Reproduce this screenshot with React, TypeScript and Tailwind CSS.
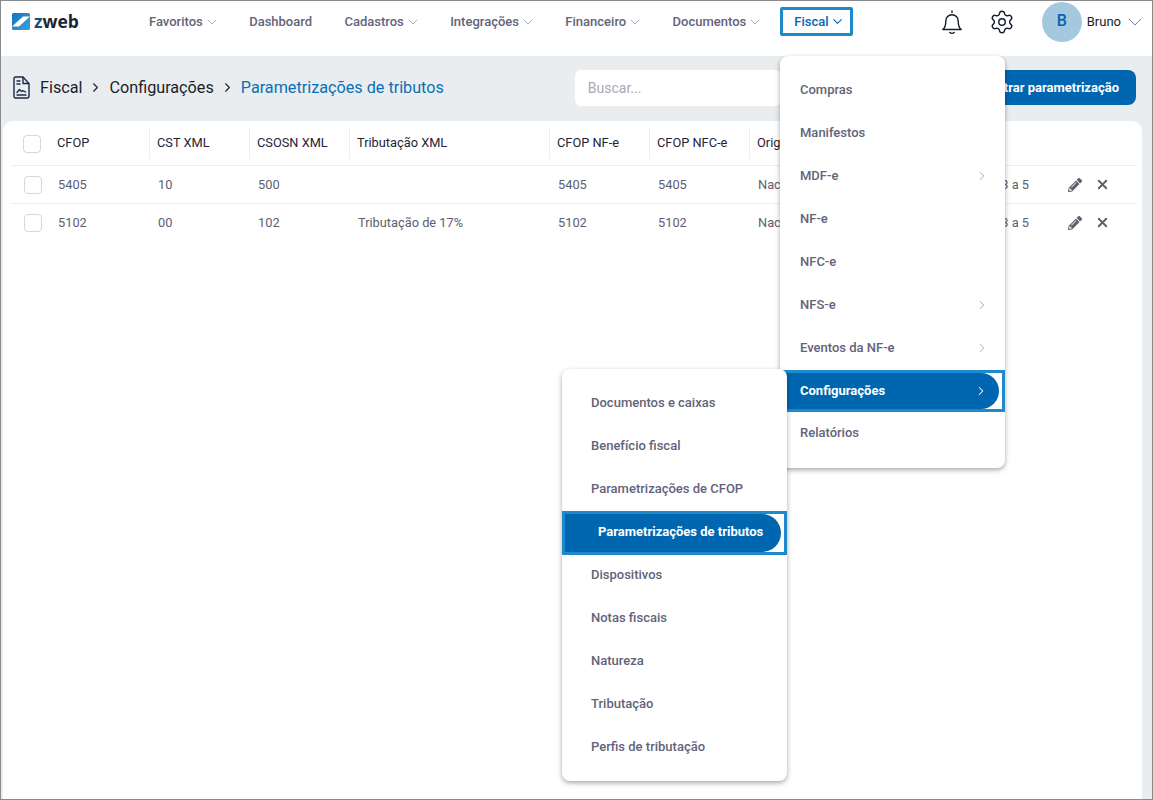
import { ChevronDown, ChevronRight, Settings, X } from "lucide-react";
import { FaPencilAlt } from "react-icons/fa";

const nav = [
  { label: "Favoritos", arrow: true },
  { label: "Dashboard", arrow: false },
  { label: "Cadastros", arrow: true },
  { label: "Integrações", arrow: true },
  { label: "Financeiro", arrow: true },
  { label: "Documentos", arrow: true },
];

const fiscalItems = [
  { label: "Compras" },
  { label: "Manifestos" },
  { label: "MDF-e", arrow: true },
  { label: "NF-e" },
  { label: "NFC-e" },
  { label: "NFS-e", arrow: true },
  { label: "Eventos da NF-e", arrow: true },
  { label: "Configurações", arrow: true, active: true },
  { label: "Relatórios" },
];

const configItems = [
  { label: "Documentos e caixas" },
  { label: "Benefício fiscal" },
  { label: "Parametrizações de CFOP" },
  { label: "Parametrizações de tributos", active: true },
  { label: "Dispositivos" },
  { label: "Notas fiscais" },
  { label: "Natureza" },
  { label: "Tributação" },
  { label: "Perfis de tributação" },
];

const columns = [
  { label: "CFOP", w: "w-[100px]" },
  { label: "CST XML", w: "w-[100px]" },
  { label: "CSOSN XML", w: "w-[100px]" },
  { label: "Tributação XML", w: "w-[200px]" },
  { label: "CFOP NF-e", w: "w-[100px]" },
  { label: "CFOP NFC-e", w: "w-[100px]" },
  { label: "Origem", w: "w-[100px]" },
];

const rows = [
  ["5405", "10", "500", "", "5405", "5405", "Nacional", "CST 3 a 5"],
  ["5102", "00", "102", "Tributação de 17%", "5102", "5102", "Nacional", "CST 3 a 5"],
];

function Logo() {
  return (
    <div className="flex items-center gap-[4px]">
      <svg width="18" height="17" viewBox="0 0 18 17">
        <defs>
          <linearGradient id="logoGrad" x1="0" y1="0" x2="1" y2="1">
            <stop offset="0" stopColor="#1573bb" />
            <stop offset="1" stopColor="#3f9fdc" />
          </linearGradient>
        </defs>
        <rect width="18" height="17" rx="1.5" fill="url(#logoGrad)" />
        <path d="M0 13.500 L11 3.500 H18 L7 13.500 Z" fill="#fff" />
      </svg>
      <span className="font-['Open_Sans',sans-serif] text-[17.5px] leading-none font-bold text-[#1d2433]">
        <span className="text-[#14507f]">z</span>web
      </span>
    </div>
  );
}

function BellIcon() {
  return (
    <svg width="26" height="26" viewBox="0 0 26 26" fill="none" stroke="#161c2b" strokeWidth="1.4" strokeLinejoin="round" strokeLinecap="round">
      <path d="M13 2v1.500M3.800 20.500c2.600-2 3-4.500 3-8.500a6.200 6.200 0 0 1 12.400 0c0 4 .4 6.500 3 8.500z" />
      <path d="M10.800 23.500c1.200 1.200 3.200 1.200 4.400 0" />
    </svg>
  );
}

function DocIcon() {
  return (
    <svg width="17" height="23" viewBox="0 0 17 23" fill="none" stroke="#1b2a4a" strokeWidth="1.4" strokeLinejoin="round" strokeLinecap="round">
      <path d="M2.500 1h7.500l6 6.500V20a2 2 0 0 1-2 2H2.500a1.500 1.500 0 0 1-1.500-1.500V2.500A1.500 1.500 0 0 1 2.500 1z" />
      <path d="M10 1.500V7.500h5.500M4 5h3M4 8h3M4 19h9M4 16.500l2.500-3 2 2 1.500-.8 2.500 1.300" />
    </svg>
  );
}

function Checkbox() {
  return <span className="block w-[18px] h-[18px] rounded-[4px] border border-[#d3d7de] bg-white" />;
}

function Menu({
  items,
  textPad,
  activePad,
  activeBox,
  className,
}: {
  items: { label: string; arrow?: boolean; active?: boolean }[];
  textPad: string;
  activePad: string;
  activeBox: string;
  className: string;
}) {
  return (
    <div className={`absolute w-[225px] h-[412px] bg-white rounded-[8px] shadow-[0_2px_5px_rgba(0,0,0,0.35)] pt-[12px] text-[13px] font-medium ${className}`}>
      {items.map((item) =>
        item.active ? (
          <div key={item.label} className={`border-[3px] border-[#1f8acb] bg-white flex ${activeBox}`}>
            <div className={`flex-1 mr-[3px] bg-[#0066b0] rounded-r-full flex items-center justify-between ${activePad} pr-[11px] text-white font-bold`}>
              <span>{item.label}</span>
              {item.arrow && <ChevronRight size={14} strokeWidth={1.75} />}
            </div>
          </div>
        ) : (
          <div key={item.label} className={`h-[43px] flex items-center justify-between ${textPad} pr-[16px] text-[#62647a]`}>
            <span>{item.label}</span>
            {item.arrow && <ChevronRight size={14} strokeWidth={1.5} className="text-[#9a9cab]" />}
          </div>
        ),
      )}
    </div>
  );
}

export default function App() {
  return (
    <div className="relative w-[1153px] h-[800px] overflow-hidden border border-[#8a8a8a] bg-[#e9edef] font-['Roboto',sans-serif] flex flex-col">
      <header className="h-[55px] bg-white flex items-center shrink-0">
        <div className="w-[148px] pl-[11px] -mt-[14px]">
          <Logo />
        </div>
        <nav className="flex items-center gap-[32.4px] text-[13px] font-medium text-[#62647a] -mt-[14px]">
          {nav.map((n) => (
            <div key={n.label} className="flex items-center">
              <span>{n.label}</span>
              {n.arrow && <ChevronDown size={16} strokeWidth={1.25} className="ml-px -mr-[3px] text-[#9a9cab]" />}
            </div>
          ))}
        </nav>
        <div className="ml-[20px] -mt-[14px] h-[29px] border-[3px] border-[#1f8acb] rounded-[2px] pl-[11px] pr-[5px] flex items-center text-[13px] font-medium text-[#0066b0]">
          <span>Fiscal</span>
          <ChevronDown size={15} strokeWidth={1.75} className="ml-px" />
        </div>
        <div className="ml-auto flex items-center -mt-[14px] pr-[5px]">
          <BellIcon />
          <Settings size={26} strokeWidth={1.3} className="text-[#161c2b] ml-[24px]" />
          <div className="ml-[27px] w-[40px] h-[40px] rounded-full bg-[#a5c8df] flex items-center justify-center pb-[2px] text-[16px] font-medium text-[#0066b0]">
            B
          </div>
          <span className="ml-[5px] text-[13px] text-[#161c2b]">Bruno</span>
          <ChevronDown size={24} strokeWidth={1} className="ml-[2px] text-[#7f8196]" />
        </div>
      </header>

      <div className="h-[65px] flex items-center pl-[12px] pr-[16px] pb-[2px] shrink-0 text-[16.2px]">
        <DocIcon />
        <span className="ml-[10px] pt-[2px] text-[#1a1f2c]">Fiscal</span>
        <ChevronRight size={15} strokeWidth={1.75} className="mx-[6px] text-[#1a1f2c]" />
        <span className="pt-[2px] text-[#1a1f2c]">Configurações</span>
        <ChevronRight size={15} strokeWidth={1.75} className="mx-[6px] text-[#1a1f2c]" />
        <span className="pt-[2px] text-[#0a70b8]">Parametrizações de tributos</span>
        <div className="ml-[131px] w-[206px] h-[36px] bg-white rounded-[6px] flex items-center pl-[13px] pt-[2px] text-[14px] text-[#a6a9b5]">
          Buscar...
        </div>
        <button className="ml-auto h-[35px] px-[17px] rounded-[8px] bg-[#0066b0] text-white text-[13px] font-bold whitespace-nowrap">
          Cadastrar parametrização
        </button>
      </div>

      <main className="w-[1139px] ml-[2px] flex-1 bg-white rounded-t-[10px] pl-[8px] pr-[5px] pt-[7px]">
        <div className="flex h-[38px] border-b border-[#eceef0] text-[12.8px] text-[#1f2433]">
          <div className="w-[39px] h-[32px] pl-[12px] flex items-center">
            <Checkbox />
          </div>
          {columns.map((c) => (
            <div key={c.label} className={`${c.w} h-[31px] flex items-center pl-[7px] pb-[2px] border-r border-[#eceef0]`}>
              {c.label}
            </div>
          ))}
        </div>
        {rows.map((r, i) => (
          <div key={r[0]} className={`flex items-center h-[38px] border-b text-[12.8px] text-[#5e6072] ${i === 0 ? "border-[#eceef0]" : "border-transparent"}`}>
            <div className="w-[47px] pl-[13px]">
              <Checkbox />
            </div>
            <div className="w-[100px]">{r[0]}</div>
            <div className="w-[100px]">{r[1]}</div>
            <div className="w-[100px]">{r[2]}</div>
            <div className="w-[200px]">{r[3]}</div>
            <div className="w-[100px]">{r[4]}</div>
            <div className="w-[100px]">{r[5]}</div>
            <div className="w-[100px]">{r[6]}</div>
            <div className="w-[200px] text-right pr-[29px]">{r[7]}</div>
            <div className="flex items-center gap-[13px] ml-[10px]">
              <FaPencilAlt size={14} />
              <X size={15} strokeWidth={3} />
            </div>
          </div>
        ))}
      </main>

      <Menu
        items={fiscalItems}
        textPad="pl-[20px]"
        activePad="pl-[17px]"
        activeBox="h-[42px] mt-px -mb-px"
        className="left-[779px] top-[55px]"
      />
      <Menu
        items={configItems}
        textPad="pl-[29px]"
        activePad="pl-[33px] pb-[2px]"
        activeBox="h-[44px] mt-px -mb-[2px]"
        className="left-[561px] top-[368px]"
      />
    </div>
  );
}
